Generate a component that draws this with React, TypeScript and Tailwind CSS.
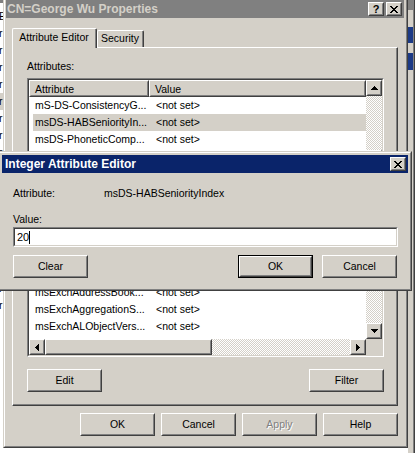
import React from "react";

type Row = { name: string; value: string };

// rows 5-11 sit under the editor dialog and are left blank
const attributes: Row[] = [
  "mS-DS-ConsistencyG...",
  "msDS-HABSeniorityIn...",
  "msDS-PhoneticComp...",
  "msDS-PhoneticDepa...",
  "",
  "",
  "",
  "",
  "",
  "",
  "",
  "msExchAddressBook...",
  "msExchAggregationS...",
  "msExchALObjectVers...",
  "msExchArbitrationM...",
].map((name) => ({ name, value: name ? "<not set>" : "" }));

// dithered scrollbar track
const CHECKER =
  "bg-[image:repeating-conic-gradient(#ffffff_0_25%,#d4d0c8_0_50%)] bg-size-[2px_2px]";

function Raised({
  className = "",
  inner = "",
  children,
}: {
  className?: string;
  inner?: string;
  children?: React.ReactNode;
}) {
  return (
    <div
      className={`border border-t-white border-l-white border-r-[#404040] border-b-[#404040] bg-[#d4d0c8] ${className}`}
    >
      <div
        className={`h-full w-full border border-t-[#d4d0c8] border-l-[#d4d0c8] border-r-[#808080] border-b-[#808080] ${inner}`}
      >
        {children}
      </div>
    </div>
  );
}

function Sunken({
  className = "",
  inner = "",
  children,
}: {
  className?: string;
  inner?: string;
  children?: React.ReactNode;
}) {
  return (
    <div
      className={`border border-t-[#808080] border-l-[#808080] border-r-white border-b-white ${className}`}
    >
      <div
        className={`h-full w-full border border-t-[#404040] border-l-[#404040] border-r-[#d4d0c8] border-b-[#d4d0c8] ${inner}`}
      >
        {children}
      </div>
    </div>
  );
}

function PushButton({
  label,
  isDefault = false,
  disabled = false,
}: {
  label: string;
  isDefault?: boolean;
  disabled?: boolean;
}) {
  const text = disabled ? (
    <span className="text-[#808080] [text-shadow:1px_1px_0_#ffffff]">{label}</span>
  ) : (
    <span>{label}</span>
  );
  if (isDefault) {
    return (
      <div className="h-[23px] w-[75px] border border-black">
        <Raised className="h-full w-full" inner="flex items-center justify-center">
          {text}
        </Raised>
      </div>
    );
  }
  return (
    <Raised className="h-[23px] w-[75px]" inner="flex items-center justify-center">
      {text}
    </Raised>
  );
}

function Arrow({ dir }: { dir: "up" | "down" | "left" | "right" }) {
  const vertical = dir === "up" || dir === "down";
  const rects = [0, 1, 2, 3].map((i) => {
    const k = dir === "up" || dir === "left" ? i : 3 - i;
    return vertical ? (
      <rect key={i} x={3 - k} y={i} width={1 + 2 * k} height={1} />
    ) : (
      <rect key={i} x={i} y={3 - k} width={1} height={1 + 2 * k} />
    );
  });
  const w = vertical ? 7 : 4;
  const h = vertical ? 4 : 7;
  return (
    <svg width={w} height={h} viewBox={`0 0 ${w} ${h}`} fill="#000" shapeRendering="crispEdges">
      {rects}
    </svg>
  );
}

function ScrollBtn({ dir }: { dir: "up" | "down" | "left" | "right" }) {
  return (
    <Raised className="h-[16px] w-[16px] shrink-0" inner="flex items-center justify-center">
      <Arrow dir={dir} />
    </Raised>
  );
}

const X_ROWS = ["11000011", "01100110", "00111100", "00011000", "00111100", "01100110", "11000011"];

function CloseGlyph() {
  return (
    <svg width="8" height="7" viewBox="0 0 8 7" fill="#000" shapeRendering="crispEdges">
      {X_ROWS.flatMap((row, y) =>
        row.split("").map((c, x) => (c === "1" ? <rect key={`${x}-${y}`} x={x} y={y} width="1" height="1" /> : null))
      )}
    </svg>
  );
}

function CaptionBtn({ children }: { children: React.ReactNode }) {
  return (
    <Raised className="h-[14px] w-[16px]" inner="flex items-center justify-center">
      {children}
    </Raised>
  );
}

function ListView() {
  return (
    <Sunken className="h-[279px] w-[357px]" inner="flex flex-col bg-white">
      <div className="flex min-h-0 flex-1">
        <div className="min-w-0 flex-1 overflow-hidden">
          <div className="flex h-[17px]">
            <Raised className="h-full w-[120px]" inner="pl-[4px] leading-[15px]">
              Attribute
            </Raised>
            <Raised className="h-full flex-1" inner="pl-[4px] leading-[15px]">
              Value
            </Raised>
          </div>
          {attributes.map((r, i) => (
            <div
              key={i}
              className={`ml-[4px] flex h-[17px] items-center whitespace-nowrap ${i === 1 ? "bg-[#d4d0c8]" : ""}`}
            >
              <span className="w-[123px] pl-[2px]">{r.name}</span>
              <span>{r.value}</span>
            </div>
          ))}
        </div>
        <div className="flex w-[16px] flex-col">
          <ScrollBtn dir="up" />
          <div className={`flex-1 ${CHECKER}`}>
            <div className="h-[54px]" />
            <Raised className="h-[100px] w-full" />
          </div>
          <ScrollBtn dir="down" />
        </div>
      </div>
      <div className="flex h-[16px]">
        <ScrollBtn dir="left" />
        <Raised className="h-full w-[167px]" />
        <div className={`flex-1 ${CHECKER}`} />
        <ScrollBtn dir="right" />
        <div className="w-[16px] bg-[#d4d0c8]" />
      </div>
    </Sunken>
  );
}

function PropertiesWindow() {
  return (
    <div className="absolute left-[3px] top-[-4px] h-[452px] w-[405px] border border-t-[#d4d0c8] border-l-[#d4d0c8] border-r-[#404040] border-b-[#404040]">
      <div className="flex h-full flex-col border border-t-white border-l-white border-r-[#808080] border-b-[#808080] bg-[#d4d0c8] py-[2px] pl-[1px] pr-[2px]">
        {/* inactive caption */}
        <div className="flex h-[18px] items-center bg-[#808080] pl-[1px] pr-[2px]">
          <span className="text-[12px] font-bold leading-none text-[#d4d0c8]">CN=George Wu Properties</span>
          <div className="ml-auto flex gap-[2px]">
            <CaptionBtn>
              <span className="text-[11px] font-bold leading-none">?</span>
            </CaptionBtn>
            <CaptionBtn>
              <CloseGlyph />
            </CaptionBtn>
          </div>
        </div>

        <div className="mt-[1px] flex-1 px-[6px] pt-[9px]">
          {/* tabs */}
          <div className="relative z-10 flex h-[19px] items-end">
            <div className="mb-[-1px] h-[20px] w-[85px] rounded-t-[2px] border-l border-r border-t border-l-white border-r-[#404040] border-t-white bg-[#d4d0c8]">
              <div className="flex h-full items-center justify-center border-r border-r-[#808080] pb-[1px]">
                Attribute Editor
              </div>
            </div>
            <div className="h-[17px] w-[47px] rounded-t-[2px] border-l border-r border-t border-l-white border-r-[#404040] border-t-white bg-[#d4d0c8]">
              <div className="flex h-full items-center justify-center border-r border-r-[#808080]">Security</div>
            </div>
          </div>

          {/* tab page */}
          <div className="h-[359px] border border-t-white border-l-white border-r-[#404040] border-b-[#404040]">
            <div className="h-full border-b border-r border-b-[#808080] border-r-[#808080] pl-[14px] pt-[12px]">
              <div className="leading-[12px]">Attributes:</div>
              <div className="mt-[6px]">
                <ListView />
              </div>
              <div className="mt-[12px] flex w-[357px] justify-between">
                <PushButton label="Edit" />
                <PushButton label="Filter" />
              </div>
            </div>
          </div>

          <div className="mt-[7px] flex justify-end gap-[6px]">
            <PushButton label="OK" />
            <PushButton label="Cancel" />
            <PushButton label="Apply" disabled />
            <PushButton label="Help" />
          </div>
        </div>
      </div>
    </div>
  );
}

function IntegerEditor() {
  return (
    <div className="absolute left-[-2px] top-[151px] z-20 h-[140px] w-[414px] border border-t-[#d4d0c8] border-l-[#d4d0c8] border-r-[#404040] border-b-[#404040]">
      <div className="flex h-full flex-col border border-t-white border-l-white border-r-[#808080] border-b-[#808080] bg-[#d4d0c8] p-[2px]">
        <div className="flex h-[18px] items-center bg-[#0a246a] pl-[3px] pr-[2px]">
          <span className="text-[12px] font-bold leading-none text-white">Integer Attribute Editor</span>
          <div className="ml-auto">
            <CaptionBtn>
              <CloseGlyph />
            </CaptionBtn>
          </div>
        </div>
        <div className="mt-[1px] flex-1 px-[11px] pt-[13px]">
          <div className="flex leading-[12px]">
            <span className="w-[91px]">Attribute:</span>
            <span>msDS-HABSeniorityIndex</span>
          </div>
          <div className="mt-[14px] leading-[12px]">Value:</div>
          <Sunken className="mt-[2px] h-[20px] w-[385px]" inner="flex items-center bg-white pl-[2px]">
            <span className="text-[11px]">20</span>
            <span className="h-[13px] w-px bg-black" />
          </Sunken>
          <div className="mt-[8px] flex">
            <PushButton label="Clear" />
            <div className="ml-auto flex gap-[9px]">
              <PushButton label="OK" isDefault />
              <PushButton label="Cancel" />
            </div>
          </div>
        </div>
      </div>
    </div>
  );
}

// slivers of the windows stacked behind
function BehindLeft() {
  const lines = Array.from({ length: 18 }, (_, i) => i);
  return (
    <div className="absolute left-0 top-0 h-[318px] w-[6px] overflow-hidden bg-white">
      <div className="h-[3px] bg-[#808080]" />
      <div className="flex flex-col pt-[5px]">
        {lines.map((i) => (
          <div key={i} className={`ml-[-1px] h-[17px] leading-[17px] ${i === 5 ? "bg-[#d4d0c8]" : ""}`}>
            {i === 0 ? "E" : "r"}
          </div>
        ))}
      </div>
    </div>
  );
}

function BehindRight() {
  return (
    <div className="absolute left-[408px] top-0 flex h-[453px] w-[11px]">
      <div className="relative w-[5px] bg-[#d4d0c8]">
        <div className="h-[10px] bg-[#808080]" />
        <div className="absolute top-[27px] h-[16px] w-full bg-[#1c3a86]" />
        <div className="absolute top-[53px] h-[17px] w-full bg-[#1c3a86]" />
      </div>
      <div className="w-px bg-[#808080]" />
      <div className="w-px bg-[#404040]" />
      <div className="flex-1 bg-white" />
    </div>
  );
}

export default function App() {
  return (
    <div className="relative h-[453px] w-[419px] overflow-hidden bg-white font-['Liberation_Sans',Arial,sans-serif] text-[10.5px] text-black">
      <BehindLeft />
      <BehindRight />
      <PropertiesWindow />
      <IntegerEditor />
    </div>
  );
}
